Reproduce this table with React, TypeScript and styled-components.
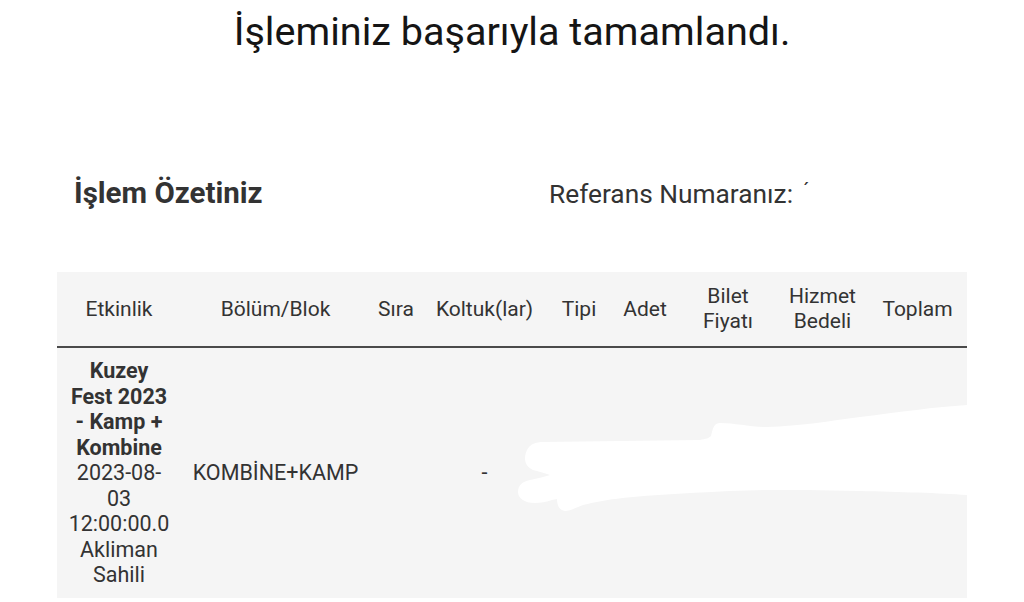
import React from "react";
import styled, { createGlobalStyle } from "styled-components";

const Global = createGlobalStyle`
  html, body { margin: 0; padding: 0; background: #ffffff; }
  body { font-family: Roboto, "Liberation Sans", Arial, sans-serif; color: #333333; }
`;

const Page = styled.div`
  width: 1024px;
  height: 602px;
  overflow: hidden;
`;

const Title = styled.h1`
  margin: 8px 0 0;
  text-align: center;
  font-size: 39.6px;
  font-weight: 400;
  line-height: 47px;
  color: #151515;
`;

const Container = styled.div`
  margin: 0 57px;
`;

const SummaryHead = styled.div`
  display: flex;
  align-items: baseline;
  margin-top: 118px;
  padding-left: 17px;
`;

const SummaryTitle = styled.h2`
  flex: 0 0 475px;
  margin: 0;
  font-size: 29.5px;
  font-weight: 700;
  line-height: 34px;
  color: #333;
`;

const Reference = styled.div`
  font-size: 26.3px;
  line-height: 34px;
  color: #333;
  white-space: nowrap;
`;

const Accent = styled.span`
  margin-left: 10px;
  font-size: 20px;
  vertical-align: 6px;
`;

const TableWrap = styled.div`
  position: relative;
  margin-top: 61px;
`;

const Table = styled.table`
  width: 910px;
  table-layout: fixed;
  border-collapse: collapse;
  background: #f5f5f5;
  color: #333;
`;

const Col = styled.col<{ $w: number }>`
  width: ${(p) => p.$w}px;
`;

const Th = styled.th`
  padding: 12px 6px;
  font-size: 21px;
  line-height: 25px;
  font-weight: 400;
  text-align: center;
  vertical-align: middle;
  border-bottom: 2px solid #4a4a4a;
`;

const Td = styled.td`
  padding: 10px 10px;
  font-size: 21.5px;
  line-height: 25.5px;
  text-align: center;
  vertical-align: middle;
  white-space: normal;
`;

const EventName = styled.b`
  font-weight: 700;
`;

const Blob = styled.svg`
  position: absolute;
  left: 0;
  top: 0;
  width: 910px;
  height: 326px;
  pointer-events: none;
`;

const cols = [124, 189, 52, 125, 64, 68, 98, 91, 99];

export default function App() {
  return (
    <Page>
      <Global />
      <Title>İşleminiz başarıyla tamamlandı.</Title>
      <Container>
        <SummaryHead>
          <SummaryTitle>İşlem Özetiniz</SummaryTitle>
          <Reference>
            Referans Numaranız:<Accent>´</Accent>
          </Reference>
        </SummaryHead>
        <TableWrap>
          <Table>
            <colgroup>
              {cols.map((w, i) => (
                <Col key={i} $w={w} />
              ))}
            </colgroup>
            <thead>
              <tr>
                <Th>Etkinlik</Th>
                <Th>Bölüm/Blok</Th>
                <Th>Sıra</Th>
                <Th>Koltuk(lar)</Th>
                <Th>Tipi</Th>
                <Th>Adet</Th>
                <Th>Bilet Fiyatı</Th>
                <Th>Hizmet Bedeli</Th>
                <Th>Toplam</Th>
              </tr>
            </thead>
            <tbody>
              <tr>
                <Td>
                  <EventName>Kuzey Fest 2023 - Kamp + Kombine</EventName>
                  <br />
                  2023-08-03 12:00:00.0 Akliman Sahili
                </Td>
                <Td>KOMBİNE+KAMP</Td>
                <Td></Td>
                <Td>-</Td>
                <Td></Td>
                <Td></Td>
                <Td></Td>
                <Td></Td>
                <Td></Td>
              </tr>
            </tbody>
          </Table>
          <Blob viewBox="57 272 910 326">
            <path
              fill="#ffffff"
              d="M527 450 C530 444 536 442 543 442 L700 440 C706 439 709 438 711 436 C713 428 714 423 720 423 C735 423 750 427 767 427 C800 426 830 421 860 417 C900 412 935 407 967 405 L967 495 C940 493 900 492 860 491 C820 490 790 490 767 490 C720 491 670 494 633 497 C610 499 595 502 583 505 C575 508 570 511 565 511 C559 510 557 505 557 499 C550 500 545 503 535 503 C524 503 518 498 518 492 C518 485 522 482 530 480 C538 478 545 477 550 475 C544 473 538 471 533 470 C527 467 525 463 525 458 C525 455 526 452 527 450 Z"
            />
          </Blob>
        </TableWrap>
      </Container>
    </Page>
  );
}
